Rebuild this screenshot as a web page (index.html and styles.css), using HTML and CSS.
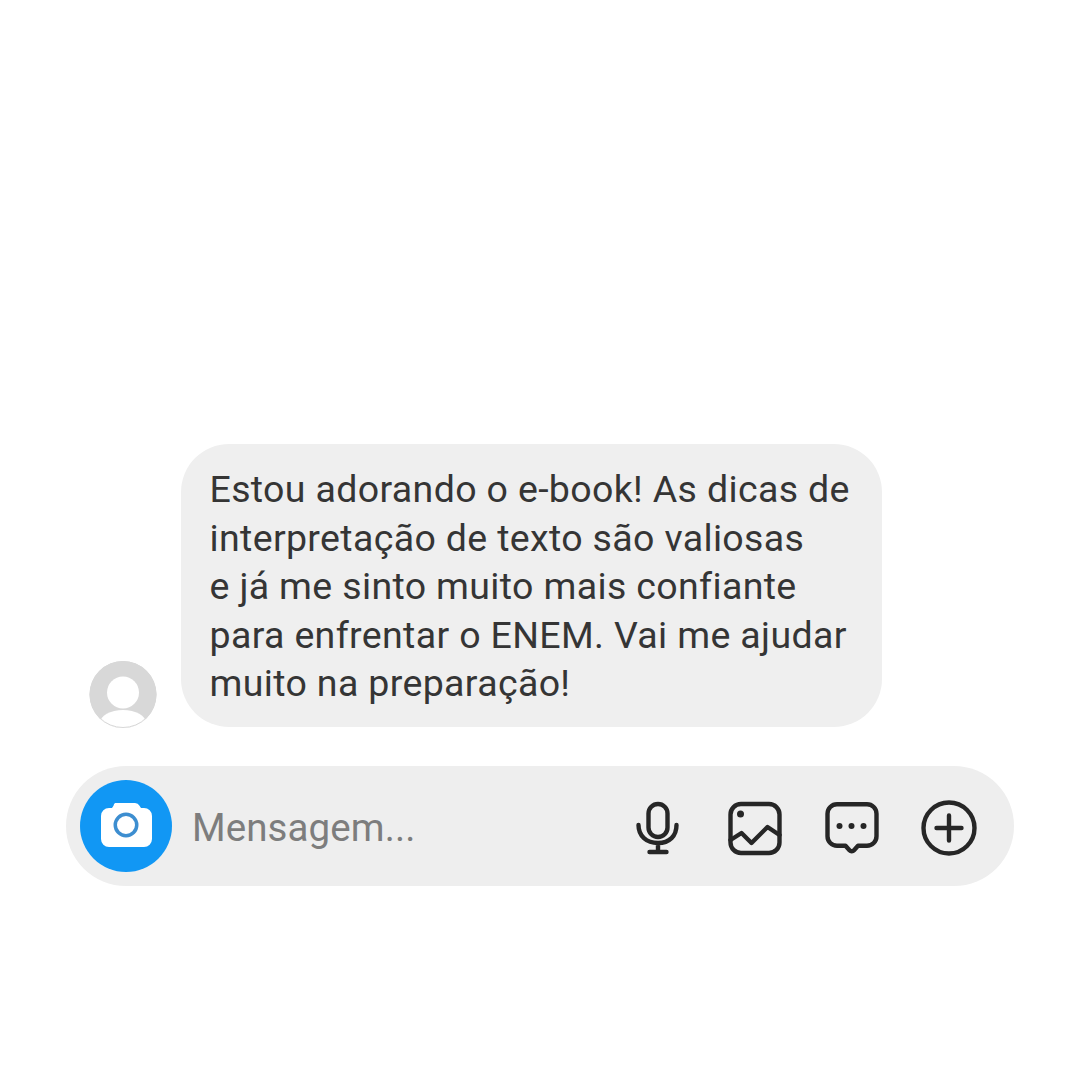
FILE: index.html
```html
<!DOCTYPE html>
<html lang="pt">
<head>
<meta charset="utf-8">
<title>Mensagem</title>
<link rel="stylesheet" href="styles.css">
</head>
<body>
<main class="chat">
  <div class="message">
    <svg class="avatar" viewBox="0 0 68 68" aria-hidden="true">
      <defs><clipPath id="av"><circle cx="34" cy="34.5" r="33.5"/></clipPath></defs>
      <circle cx="34" cy="34.5" r="33.5" fill="#d8d8d8"/>
      <g clip-path="url(#av)">
        <circle cx="34" cy="32.5" r="16" fill="#fff"/>
        <ellipse cx="34" cy="63" rx="23" ry="13" fill="#fff"/>
      </g>
      <circle cx="34" cy="34.5" r="33" fill="none" stroke="#d8d8d8" stroke-width="1"/>
    </svg>
    <div class="bubble">
      <div class="line">Estou adorando o e-book! As dicas de</div>
      <div class="line">interpretação de texto são valiosas</div>
      <div class="line">e já me sinto muito mais confiante</div>
      <div class="line">para enfrentar o ENEM. Vai me ajudar</div>
      <div class="line">muito na preparação!</div>
    </div>
  </div>
  <div class="composer">
    <div class="camera">
      <svg class="camera-icon" viewBox="0 0 51 44" aria-hidden="true">
        <path fill="#fff" d="M14 0h20a5 5 0 0 1 4.500 2.800L40 5h3a8 8 0 0 1 8 8v23a8 8 0 0 1-8 8H8a8 8 0 0 1-8-8V13a8 8 0 0 1 8-8h3l1.500-2.200A5 5 0 0 1 14 0z"/>
        <circle cx="25" cy="22" r="10.750" fill="none" stroke="#3d8ed0" stroke-width="3.500"/>
      </svg>
    </div>
    <span class="placeholder">Mensagem...</span>
    <div class="actions">
      <svg class="icon" viewBox="0 0 60 60" aria-hidden="true">
        <rect x="20.500" y="6" width="19" height="33" rx="9.500"/>
        <path d="M10.500 27c0 11 8 18 19.500 18s18.500-7 18.500-18M30 45v9M21.500 54h17"/>
      </svg>
      <svg class="icon" viewBox="0 0 60 60" aria-hidden="true">
        <rect x="5.500" y="6" width="49" height="49" rx="10.500"/>
        <path d="M5.500 42l11-7 10 10 16-16 12 8"/>
        <circle class="dot" cx="15.500" cy="16" r="3.500"/>
      </svg>
      <svg class="icon" viewBox="0 0 60 60" aria-hidden="true">
        <path d="M15 6.250h30a9.500 9.500 0 0 1 9.500 9.500v22.500a9.500 9.500 0 0 1-9.500 9.500h-9l-4 4.500a3 3 0 0 1-4.500 0l-4-4.500H15a9.500 9.500 0 0 1-9.500-9.500v-22.500a9.500 9.500 0 0 1 9.500-9.500z"/>
        <circle class="dot" cx="17.500" cy="28" r="3"/>
        <circle class="dot" cx="29.500" cy="28" r="3"/>
        <circle class="dot" cx="41.500" cy="28" r="3"/>
      </svg>
      <svg class="icon" viewBox="0 0 60 60" aria-hidden="true">
        <circle cx="30" cy="30" r="25.500"/>
        <path d="M30 17.500v25M17.500 30h25"/>
      </svg>
    </div>
  </div>
</main>
</body>
</html>
```
FILE: styles.css
```css
* { box-sizing: border-box; }
html, body { margin: 0; height: 100%; background: #fff; }
body { font-family: Roboto, "Liberation Sans", sans-serif; }

.chat {
  display: flex;
  flex-direction: column;
  gap: 39px;
  padding: 444px 66px 0;
}

.message {
  display: flex;
  align-items: flex-end;
  gap: 24px;
  padding-left: 23px;
}

.avatar { width: 68px; height: 68px; flex: none; margin-bottom: -1px; }

.bubble {
  width: 701px;
  height: 283px;
  padding: 21px 0 0 28.500px;
  border-radius: 48px;
  background: #efefef;
  color: #353535;
  font-size: 37.500px;
  letter-spacing: 0.35px;
  line-height: 48.500px;
}

.line { white-space: nowrap; }

.composer {
  display: flex;
  align-items: center;
  width: 948px;
  height: 120px;
  padding: 0 35.500px 0 14px;
  border-radius: 60px;
  background: #eeeeee;
}

.camera {
  display: flex;
  align-items: center;
  justify-content: center;
  width: 92px;
  height: 92px;
  flex: none;
  border-radius: 50%;
  background: #1197f4;
}

.camera-icon { width: 51px; height: 44px; margin-top: -2px; }

.placeholder {
  margin-left: 20px;
  margin-top: 2px;
  color: #7d7d7d;
  font-size: 38.500px;
  letter-spacing: 0.1px;
}

.actions {
  display: flex;
  align-items: center;
  gap: 37px;
  margin-left: auto;
  margin-top: 4px;
}

.icon {
  width: 60px;
  height: 60px;
  fill: none;
  stroke: #262626;
  stroke-width: 4.400;
  stroke-linecap: round;
  stroke-linejoin: round;
}

.icon .dot { fill: #262626; stroke: none; }
```
